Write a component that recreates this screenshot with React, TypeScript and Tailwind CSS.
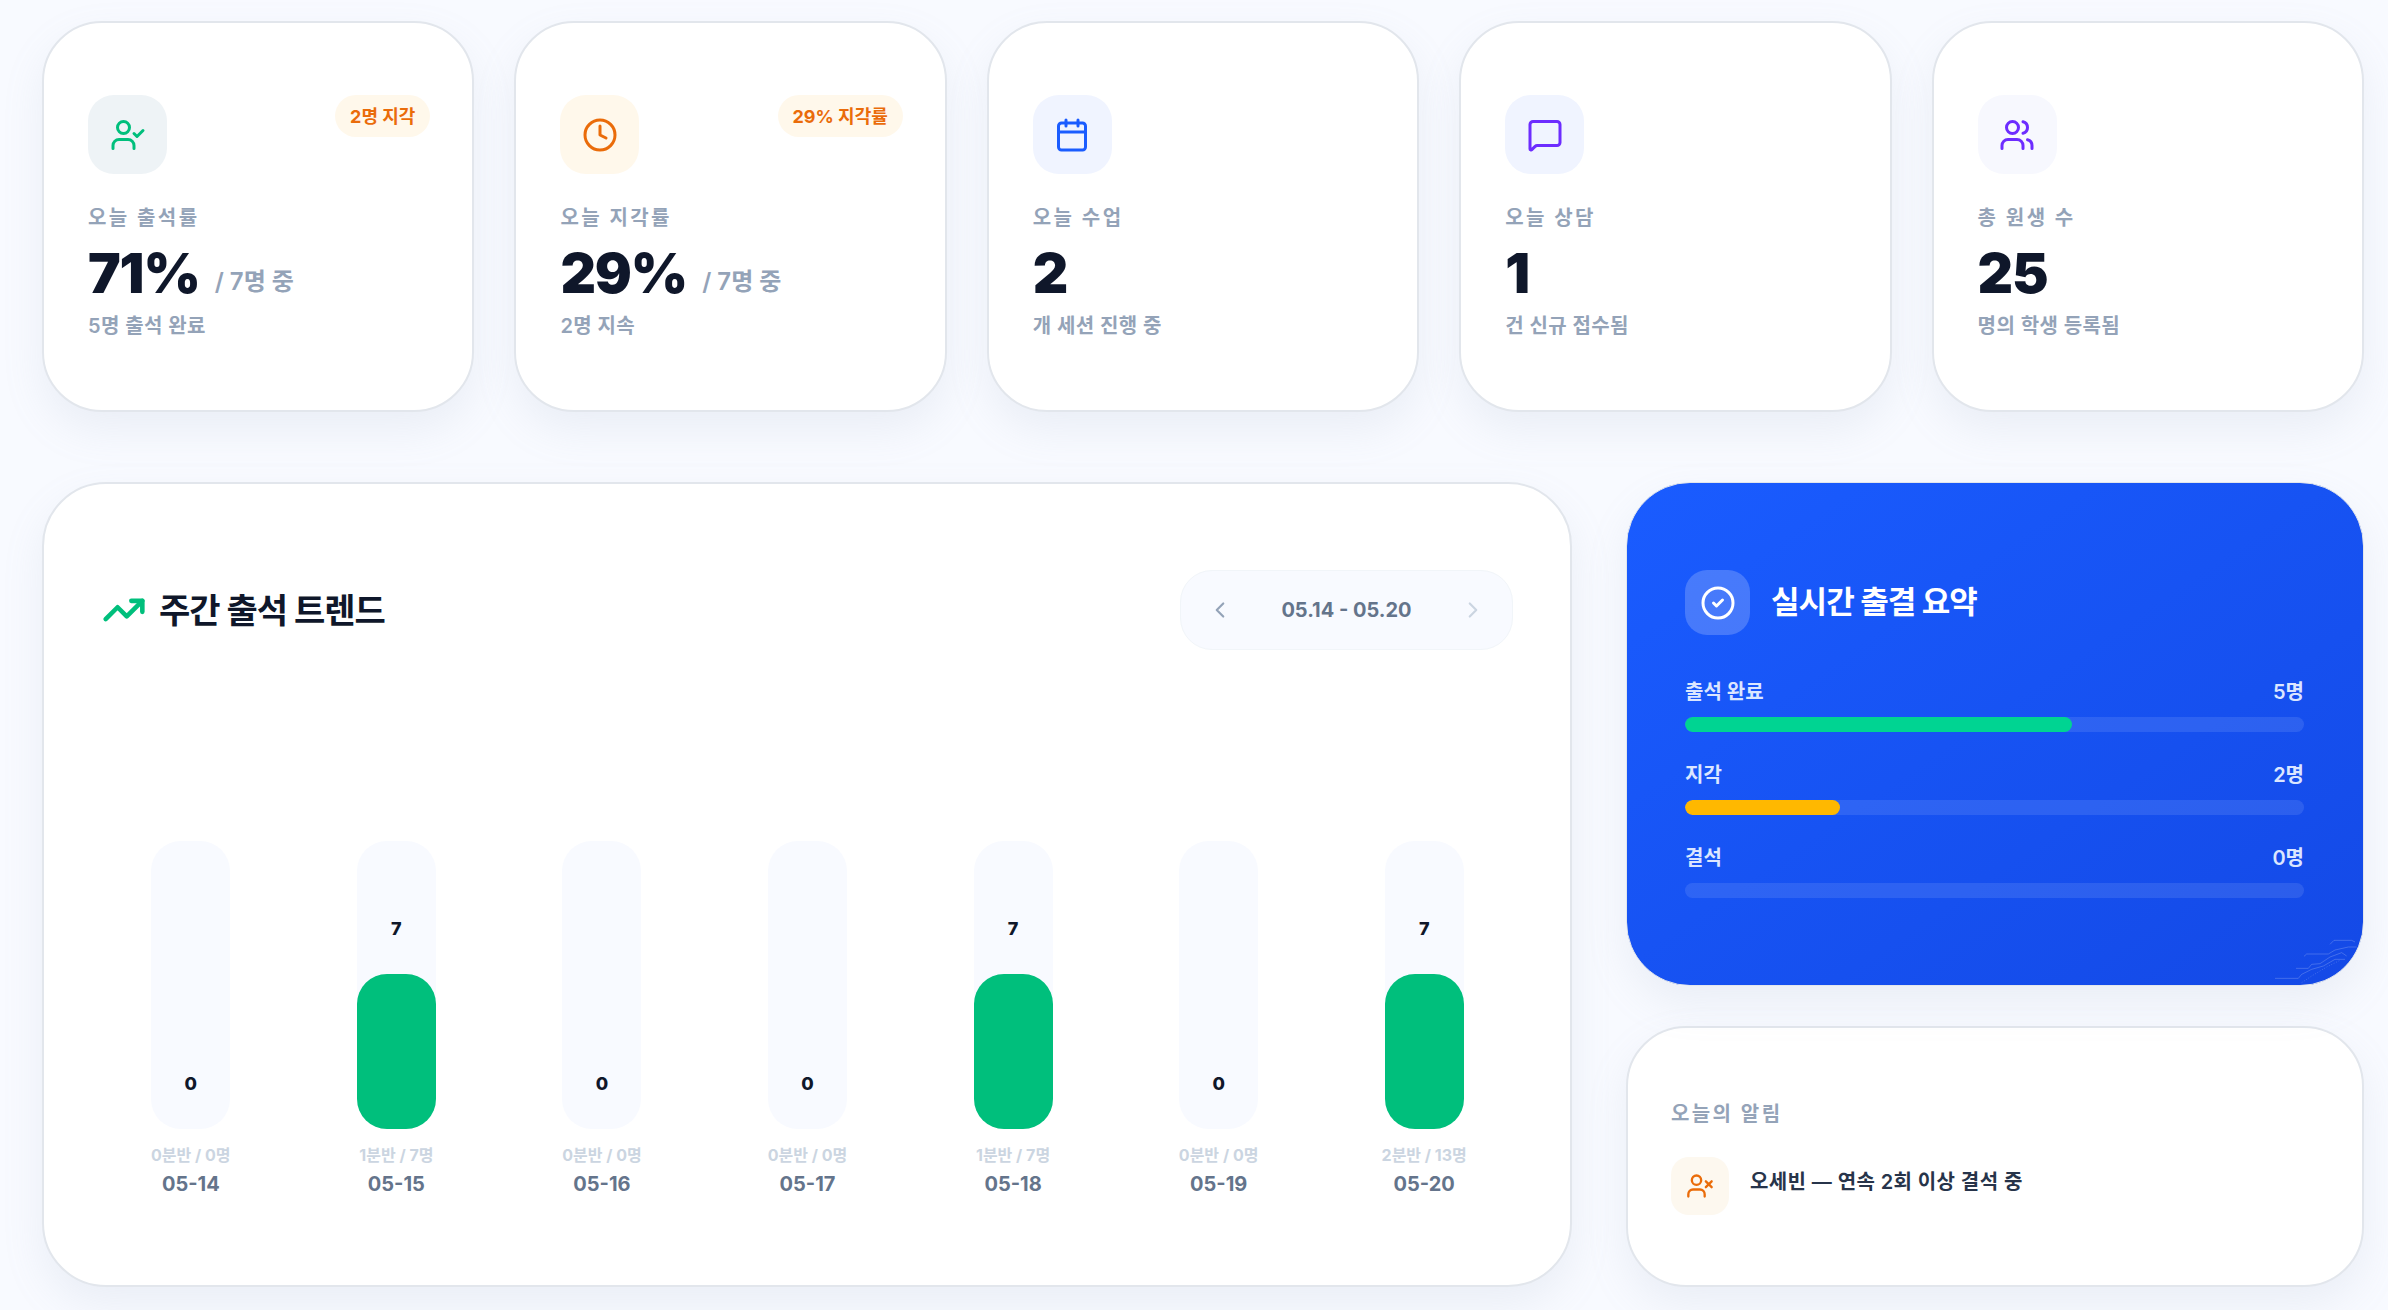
import React from 'react';
import { Calendar, ChevronLeft, ChevronRight, CircleCheck, Clock, MessageSquare, TrendingUp, UserCheck, Users, UserX } from 'lucide-react';

const cardClasses = 'bg-white border-2 border-[#e2e6ec] shadow-[0_18px_40px_rgba(148,163,184,0.13)]';

const stats = [
  { icon: UserCheck, iconClasses: 'bg-[#eef3f6] text-[#00bf7c]', badge: '2명 지각', label: '오늘 출석률', value: '71%', sub: '/ 7명 중', foot: '5명 출석 완료' },
  { icon: Clock, iconClasses: 'bg-[#fff8eb] text-[#ea6c0a]', badge: '29% 지각률', label: '오늘 지각률', value: '29%', sub: '/ 7명 중', foot: '2명 지속' },
  { icon: Calendar, iconClasses: 'bg-[#f0f4ff] text-[#1a5cff]', label: '오늘 수업', value: '2', foot: '개 세션 진행 중' },
  { icon: MessageSquare, iconClasses: 'bg-[#f0f4ff] text-[#6d2cff]', label: '오늘 상담', value: '1', foot: '건 신규 접수됨' },
  { icon: Users, iconClasses: 'bg-[#f7f8fe] text-[#6d2cff]', label: '총 원생 수', value: '25', foot: '명의 학생 등록됨' },
];

const days = [
  { date: '05-14', sub: '0분반 / 0명', count: 0 },
  { date: '05-15', sub: '1분반 / 7명', count: 7 },
  { date: '05-16', sub: '0분반 / 0명', count: 0 },
  { date: '05-17', sub: '0분반 / 0명', count: 0 },
  { date: '05-18', sub: '1분반 / 7명', count: 7 },
  { date: '05-19', sub: '0분반 / 0명', count: 0 },
  { date: '05-20', sub: '2분반 / 13명', count: 7 },
];

const summary = [
  { label: '출석 완료', value: '5명', percent: 62.5, color: 'bg-[#00d492]' },
  { label: '지각', value: '2명', percent: 25, color: 'bg-[#ffb800]' },
  { label: '결석', value: '0명', percent: 0, color: 'bg-[#ff5a5a]' },
];

const StatCard = ({ stat }: { stat: (typeof stats)[number] }) => {
  const Icon = stat.icon;
  return (
    <div className={`h-[391px] rounded-[60px] pt-[72px] pr-[42px] pl-[44px] ${cardClasses}`}>
      <div className="flex items-start justify-between">
        <div className={`flex h-[79px] w-[79px] items-center justify-center rounded-[26px] ${stat.iconClasses}`}>
          <Icon size={36} strokeWidth={2} />
        </div>
        {stat.badge && (
          <span className="flex h-[42px] items-center rounded-full bg-[#fff8eb] px-[15px] text-[18px] font-bold text-[#ea6c0a]">
            {stat.badge}
          </span>
        )}
      </div>
      <p className="mt-[30px] h-[28px] text-[20px] leading-[28px] font-semibold tracking-[0.12em] text-[#94a3b8]">{stat.label}</p>
      <div className="mt-[8px] flex h-[66px] items-baseline gap-[15px]">
        <span className="text-[55px] leading-[66px] font-black tracking-[-0.02em] text-[#0f172a]">{stat.value}</span>
        {stat.sub && <span className="-translate-y-[3px] text-[24px] font-semibold text-[#94a3b8]">{stat.sub}</span>}
      </div>
      <p className="mt-[5px] text-[20px] leading-[30px] font-semibold tracking-[0.02em] text-[#94a3b8]">{stat.foot}</p>
    </div>
  );
};

const DayBar = ({ day }: { day: (typeof days)[number] }) => (
  <div className="flex flex-col items-center">
    <div className="flex h-[288px] w-[79px] flex-col justify-end rounded-[30px] bg-[#f8faff]">
      <div className="mb-[33px] text-center text-[18px] leading-[24px] font-extrabold text-[#0f172a]">{day.count}</div>
      {day.count > 0 && <div className="h-[155px] rounded-[30px] bg-[#00bf7c]" />}
    </div>
    <div className="mt-[16px] text-[16px] leading-[20px] font-bold text-[#cbd5e1]">{day.sub}</div>
    <div className="mt-[5px] text-[20px] leading-[28px] font-bold text-[#64748b]">{day.date}</div>
  </div>
);

const App = () => {
  return (
    <div className="h-[1310px] overflow-hidden bg-[#f8faff] pt-[21px] pr-[24px] pl-[42px] font-[family-name:Inter,'Noto_Sans_CJK_KR',sans-serif]">
      <div className="grid grid-cols-5 gap-[40px]">
        {stats.map((stat) => (
          <StatCard key={stat.label} stat={stat} />
        ))}
      </div>

      <div className="mt-[70px] flex gap-[54px]">
        <div className={`h-[805px] w-[1530px] rounded-[64px] pt-[86px] pr-[43px] pl-[44px] ${cardClasses}`}>
          <div className="mr-[14px] ml-[14px] flex h-[80px] items-center justify-between">
            <div className="flex items-center gap-[13px]">
              <TrendingUp size={44} strokeWidth={2.5} className="text-[#00bf7c]" />
              <h2 className="text-[34px] font-bold tracking-[-0.03em] text-[#0f172a]">주간 출석 트렌드</h2>
            </div>
            <div className="flex h-[80px] w-[333px] items-center justify-between rounded-[32px] border border-[#f1f5f9] bg-[#f8faff] px-[26px]">
              <ChevronLeft size={26} className="text-[#94a3b8]" />
              <span className="text-[20px] font-bold text-[#64748b]">05.14 - 05.20</span>
              <ChevronRight size={26} className="text-[#cbd5e1]" />
            </div>
          </div>
          <div className="mt-[191px] grid grid-cols-7">
            {days.map((day) => (
              <DayBar key={day.date} day={day} />
            ))}
          </div>
        </div>

        <div className="flex w-[738px] flex-col gap-[40px]">
          <div className="relative h-[504px] overflow-hidden rounded-[64px] border border-[#e2e6ec] bg-gradient-to-br from-[#1a5cff] to-[#1449e6] pt-[87px] pr-[59px] pl-[58px] shadow-[0_18px_40px_rgba(148,163,184,0.13)]">
            <div className="flex items-center gap-[21px]">
              <div className="flex h-[65px] w-[65px] items-center justify-center rounded-[22px] bg-white/20">
                <CircleCheck size={36} strokeWidth={2} className="text-white" />
              </div>
              <h2 className="text-[31px] font-bold tracking-[-0.03em] text-white">실시간 출결 요약</h2>
            </div>
            <div className="mt-[42px] flex flex-col gap-[28px]">
              {summary.map((row) => (
                <div key={row.label}>
                  <div className="flex items-center justify-between text-[20px] leading-[30px] font-semibold text-[#dbe6ff]">
                    <span>{row.label}</span>
                    <span>{row.value}</span>
                  </div>
                  <div className="mt-[10px] h-[15px] overflow-hidden rounded-full bg-white/10">
                    <div className={`h-full rounded-full ${row.color}`} style={{ width: `${row.percent}%` }} />
                  </div>
                </div>
              ))}
            </div>
            <svg viewBox="0 0 549 312" className="absolute right-0 bottom-0 h-[104px] w-[183px]" fill="none" stroke="#ffffff" strokeOpacity="0.3" strokeWidth="2">
              <path d="M450 190 L462 178 L515 178 L525 183" />
              <path d="M372 226 L380 219 L445 219 L465 207 L505 198 L530 198" />
              <path d="M348 262 L385 262 L395 250 L420 248 L450 228 L485 215 L500 225" />
              <path d="M285 292 L355 292 L365 280 L395 265 L430 255 L465 235 L495 235" />
              <path d="M365 305 L395 285 L440 258 L480 238" strokeDasharray="3 5" />
            </svg>
          </div>

          <div className={`h-[261px] rounded-[60px] pt-[72px] pr-[43px] pl-[43px] ${cardClasses}`}>
            <p className="text-[20px] leading-[28px] font-semibold tracking-[0.12em] text-[#94a3b8]">오늘의 알림</p>
            <div className="mt-[29px] flex items-center gap-[21px]">
              <div className="flex h-[58px] w-[58px] items-center justify-center rounded-[18px] bg-[#fdf8ef] text-[#ea6c0a]">
                <UserX size={28} strokeWidth={2} />
              </div>
              <span className="mb-[9px] text-[20px] font-semibold tracking-[0.02em] text-[#27344a]">오세빈 — 연속 2회 이상 결석 중</span>
            </div>
          </div>
        </div>
      </div>
    </div>
  );
};

export default App;
